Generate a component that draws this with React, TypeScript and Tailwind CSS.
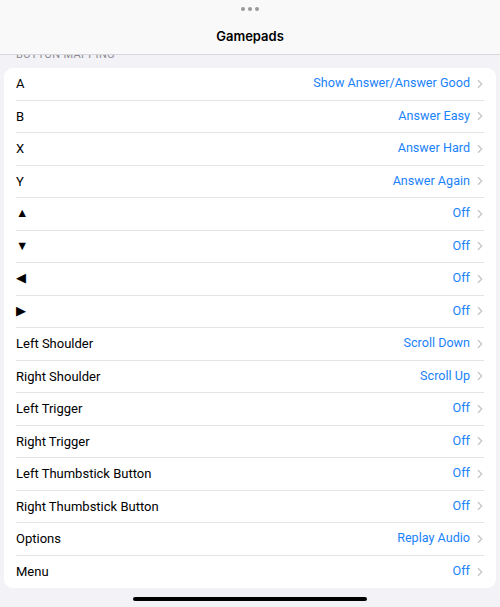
import { ChevronRight } from "lucide-react";

const rows: [string, string][] = [
  ["A", "Show Answer/Answer Good"],
  ["B", "Answer Easy"],
  ["X", "Answer Hard"],
  ["Y", "Answer Again"],
  ["▲", "Off"],
  ["▼", "Off"],
  ["◀", "Off"],
  ["▶", "Off"],
  ["Left Shoulder", "Scroll Down"],
  ["Right Shoulder", "Scroll Up"],
  ["Left Trigger", "Off"],
  ["Right Trigger", "Off"],
  ["Left Thumbstick Button", "Off"],
  ["Right Thumbstick Button", "Off"],
  ["Options", "Replay Audio"],
  ["Menu", "Off"],
];

export default function App() {
  return (
    <div className="flex h-[607px] w-[500px] flex-col overflow-hidden bg-[#f2f2f7] font-['Roboto','Liberation_Sans',sans-serif] text-black">
      <header className="flex h-[55px] shrink-0 flex-col items-center border-b border-[#d8d8dc] bg-[#f9f9f9]">
        <div className="mt-[7px] flex gap-[3px]">
          <span className="h-[4px] w-[4px] rounded-full bg-[#9a9a9e]" />
          <span className="h-[4px] w-[4px] rounded-full bg-[#9a9a9e]" />
          <span className="h-[4px] w-[4px] rounded-full bg-[#9a9a9e]" />
        </div>
        <h1 className="mt-[19px] font-['Inter',sans-serif] text-[13px] font-semibold leading-none">Gamepads</h1>
      </header>

      <div className="h-[12px] shrink-0 overflow-hidden pl-[16px]">
        <p className="-mt-[6px] text-[11px] leading-[12px] tracking-[0.03em] text-[#8a8a8e]">BUTTON MAPPING</p>
      </div>

      <div className="mx-[4px] mt-[1px] rounded-[9px] bg-white">
        {rows.map(([label, value], i) => (
          <div key={i} className="mx-[12px] flex h-[32.5px] items-center border-[#e4e4e8] [&:not(:last-child)]:border-b">
            <span className={label.length === 1 && label > "Z" ? "text-[12.5px]" : "text-[13px]"}>{label}</span>
            <span className="ml-auto text-[12.6px] text-[#1a82fb]">{value}</span>
            <ChevronRight className="ml-[3px] -mr-[3px] h-[14px] w-[14px] text-[#c4c4c7]" strokeWidth={2} />
          </div>
        ))}
      </div>

      <div className="mt-auto mb-[6px] flex justify-center">
        <span className="h-[4px] w-[234px] rounded-full bg-black" />
      </div>
    </div>
  );
}
